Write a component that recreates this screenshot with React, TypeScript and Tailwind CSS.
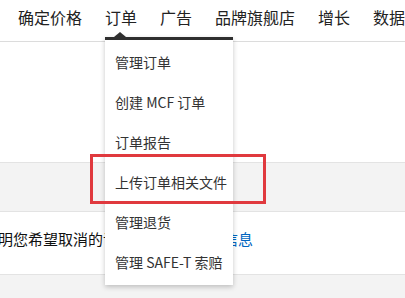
import React from 'react';

const navItems = ['确定价格', '订单', '广告', '品牌旗舰店', '增长', '数据报告'];

const menuItems = ['管理订单', '创建 MCF 订单', '订单报告', '上传订单相关文件', '管理退货', '管理 SAFE-T 索赔'];

const OrdersMenu = () => (
  <div className="absolute left-[105px] top-[32px] w-[128px]">
    {/* caret above the dark top bar */}
    <div className="absolute left-[9px] top-0 w-0 h-0 border-l-[6px] border-r-[6px] border-b-[5px] border-l-transparent border-r-transparent border-b-[#2f2f2f]" />
    <div className="mt-[5px] bg-white border-t-[3px] border-[#2f2f2f] pt-[2px] pb-[3px] shadow-[0_2px_5px_rgba(0,0,0,0.22)]">
      {menuItems.map((item) => (
        <div key={item} className="h-[40px] flex items-center pl-[10px] text-[14px] text-[#333] whitespace-nowrap">
          {item}
        </div>
      ))}
    </div>
  </div>
);

export default function App() {
  return (
    <div
      className="relative w-[405px] h-[298px] overflow-hidden bg-[#f3f3f3]"
      style={{ fontFamily: '"Noto Sans CJK SC", "Noto Sans", sans-serif' }}
    >
      <nav className="h-[42px] bg-white border-b border-[#dcdcdc] flex items-start gap-[23px] pl-[18px] pt-[7px] text-[16px] leading-[20px] text-[#222] whitespace-nowrap">
        {navItems.map((n) => (
          <span key={n}>{n}</span>
        ))}
      </nav>

      <div className="h-[120px] bg-white" />

      <div className="h-[50px] border-t border-b border-[#e3e3e3] bg-[#f3f3f3]" />

      <div className="h-[63px] bg-white border-b border-[#e3e3e3] pt-[17px] pl-0 whitespace-nowrap">
        <p className="ml-[-2px] text-[15px] leading-[20px] text-[#111]">
          明您希望取消的订单。请<span className="text-[#0066c0]">查看详细信息</span>
        </p>
      </div>

      <OrdersMenu />

      {/* highlight box */}
      <div className="absolute left-[90px] top-[154px] w-[176px] h-[50px] border-[3px] border-[#e0393e]" />
    </div>
  );
}
